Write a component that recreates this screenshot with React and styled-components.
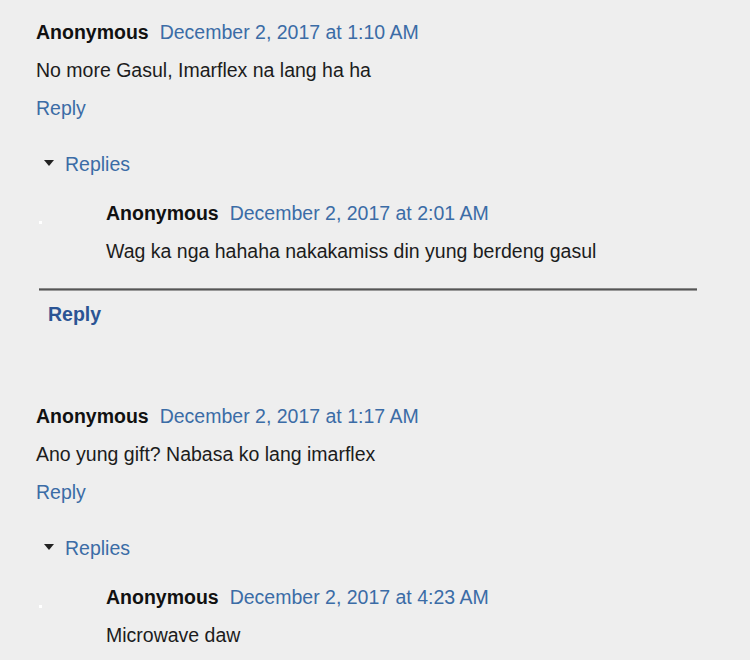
import styled, { createGlobalStyle } from 'styled-components';

const GlobalStyle = createGlobalStyle`
  html, body {
    margin: 0;
    padding: 0;
    background: #eeeeee;
  }
  body {
    font-family: "Liberation Sans", Arial, sans-serif;
    font-size: 19.5px;
    color: #1c1c1c;
  }
`;

const comments = [
  {
    date: 'December 2, 2017 at 1:10 AM',
    text: 'No more Gasul, Imarflex na lang ha ha',
    reply: {
      date: 'December 2, 2017 at 2:01 AM',
      text: 'Wag ka nga hahaha nakakamiss din yung berdeng gasul',
    },
  },
  {
    date: 'December 2, 2017 at 1:17 AM',
    text: 'Ano yung gift? Nabasa ko lang imarflex',
    reply: {
      date: 'December 2, 2017 at 4:23 AM',
      text: 'Microwave daw',
    },
  },
];

const App = () => {
  return (
    <>
      <GlobalStyle />
      <Thread>
        {comments.map((c, i) => (
          <Comment key={i}>
            <Header>
              <Author>Anonymous</Author>
              <DateLink href="#">{c.date}</DateLink>
            </Header>
            <Body>{c.text}</Body>
            <Line>
              <TextLink href="#">Reply</TextLink>
            </Line>

            <Toggle>
              <Caret />
              <TextLink href="#">Replies</TextLink>
            </Toggle>

            <Nested>
              <Header>
                <Author>Anonymous</Author>
                <DateLink href="#">{c.reply.date}</DateLink>
              </Header>
              <Body>{c.reply.text}</Body>
            </Nested>

            <Divider />
            <Line>
              <BoldReply href="#">Reply</BoldReply>
            </Line>
          </Comment>
        ))}
      </Thread>
    </>
  );
};

const Thread = styled.div`
  padding: 13px 0 0 36px;
`;

const Comment = styled.div`
  margin-bottom: 64px;
`;

const Header = styled.div`
  display: flex;
  align-items: baseline;
  line-height: 38px;
`;

const Author = styled.span`
  font-weight: 700;
  color: #111;
`;

const DateLink = styled.a`
  margin-left: 11px;
  color: #3b6ca6;
  text-decoration: none;
`;

const Body = styled.div`
  line-height: 38px;
  color: #1c1c1c;
`;

const Line = styled.div`
  line-height: 38px;
`;

const TextLink = styled.a`
  color: #3b6ca6;
  text-decoration: none;
`;

const BoldReply = styled.a`
  display: inline-block;
  margin-left: 12px;
  margin-top: 4px;
  font-weight: 700;
  color: #2b5494;
  text-decoration: none;
`;

const Toggle = styled.div`
  display: flex;
  align-items: center;
  margin-top: 18px;
  padding-left: 8px;
  line-height: 38px;
`;

const Caret = styled.span`
  width: 0;
  height: 0;
  margin-right: 11px;
  margin-top: -3px;
  border-left: 5.5px solid transparent;
  border-right: 5.5px solid transparent;
  border-top: 6px solid #222;
`;

const Nested = styled.div`
  position: relative;
  margin-top: 11px;
  padding-left: 70px;

  &::before {
    content: '';
    position: absolute;
    left: 3px;
    top: 27px;
    width: 3px;
    height: 3px;
    background: #ffffff;
  }
`;

const Divider = styled.div`
  margin: 18px 0 0 3px;
  width: 658px;
  height: 3px;
  background: #555;
  border-top: 1px solid #888;
  border-bottom: 1px solid #999;
  box-sizing: border-box;
`;

export default App;
